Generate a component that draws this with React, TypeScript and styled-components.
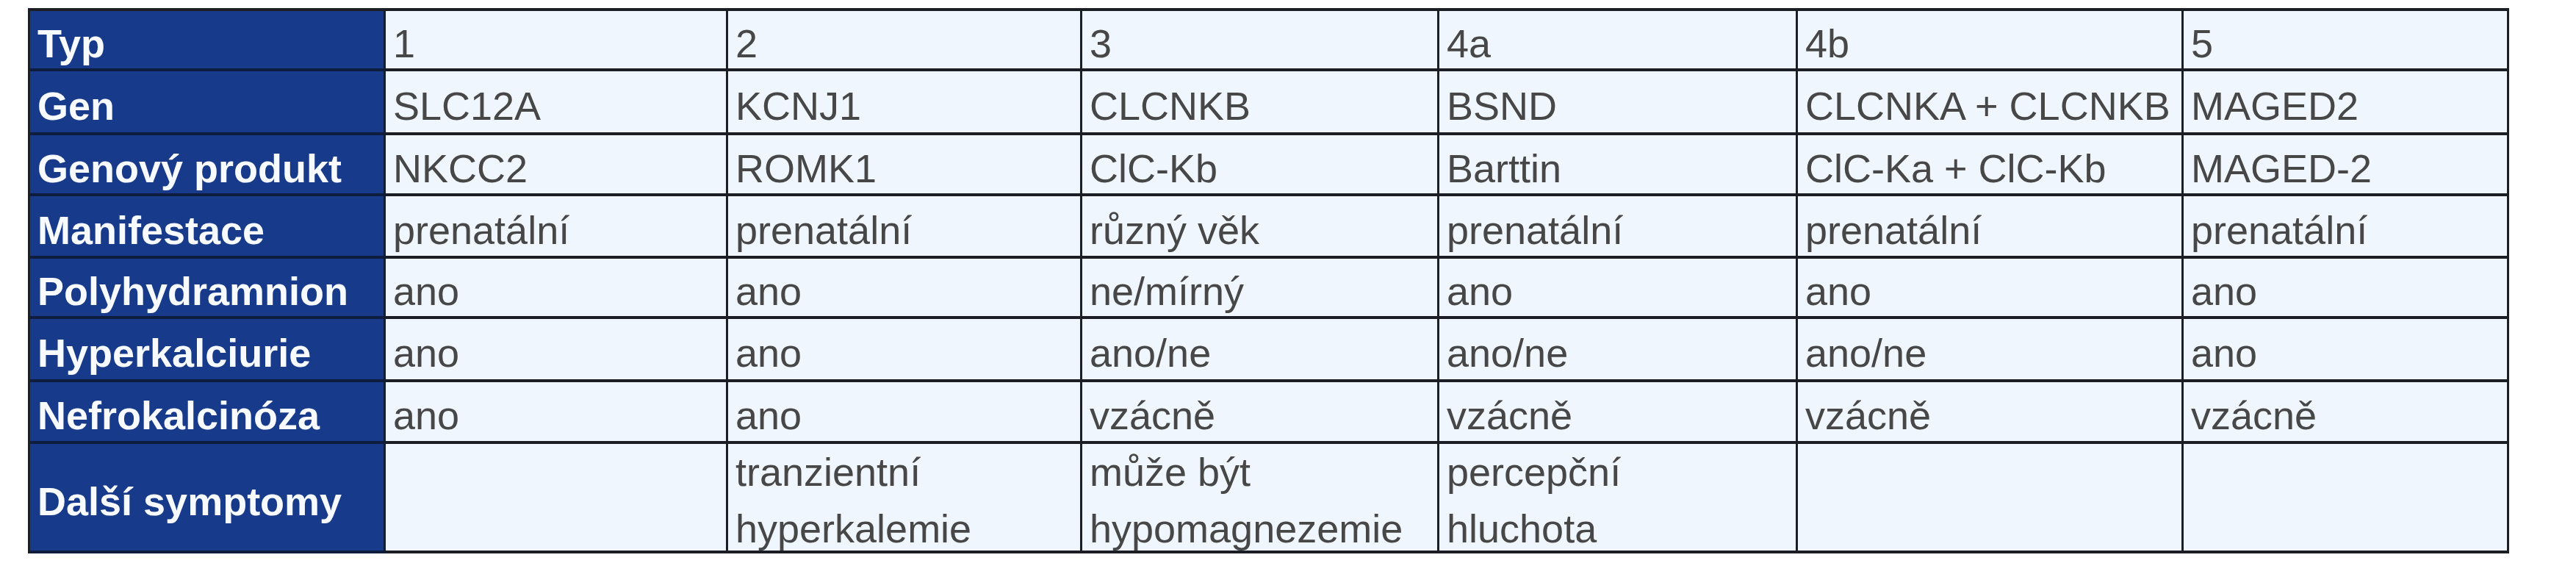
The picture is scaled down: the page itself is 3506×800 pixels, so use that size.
import React from "react";
import styled, { createGlobalStyle } from "styled-components";

const GlobalStyle = createGlobalStyle`
  html, body {
    margin: 0;
    padding: 0;
    background: #ffffff;
  }
  body {
    font-family: "Liberation Sans", Arial, sans-serif;
  }
`;

const LINE = "#1b1e24";

const COLUMNS = [484, 466, 482, 486, 488, 525, 443];

type RowData = { label: string; height: number; cells: string[][] };

const ROWS: RowData[] = [
  { label: "Typ", height: 82, cells: [["1"], ["2"], ["3"], ["4a"], ["4b"], ["5"]] },
  {
    label: "Gen",
    height: 87,
    cells: [["SLC12A"], ["KCNJ1"], ["CLCNKB"], ["BSND"], ["CLCNKA + CLCNKB"], ["MAGED2"]],
  },
  {
    label: "Genový produkt",
    height: 83,
    cells: [["NKCC2"], ["ROMK1"], ["ClC-Kb"], ["Barttin"], ["ClC-Ka + ClC-Kb"], ["MAGED-2"]],
  },
  {
    label: "Manifestace",
    height: 85,
    cells: [["prenatální"], ["prenatální"], ["různý věk"], ["prenatální"], ["prenatální"], ["prenatální"]],
  },
  {
    label: "Polyhydramnion",
    height: 82,
    cells: [["ano"], ["ano"], ["ne/mírný"], ["ano"], ["ano"], ["ano"]],
  },
  {
    label: "Hyperkalciurie",
    height: 86,
    cells: [["ano"], ["ano"], ["ano/ne"], ["ano/ne"], ["ano/ne"], ["ano"]],
  },
  {
    label: "Nefrokalcinóza",
    height: 84,
    cells: [["ano"], ["ano"], ["vzácně"], ["vzácně"], ["vzácně"], ["vzácně"]],
  },
  {
    label: "Další symptomy",
    height: 149,
    cells: [
      [],
      ["tranzientní", "hyperkalemie"],
      ["může být", "hypomagnezemie"],
      ["percepční", "hluchota"],
      [],
      [],
    ],
  },
];

const Page = styled.main`
  padding: 11px 0 0 38px;
`;

const Table = styled.div<{ $columns: number[]; $rows: number[] }>`
  display: grid;
  grid-template-columns: ${(p) => p.$columns.map((c) => `${c}px`).join(" ")};
  grid-template-rows: ${(p) => p.$rows.map((r) => `${r}px`).join(" ")};
  width: max-content;
  border-top: 4px solid ${LINE};
  border-left: 3px solid ${LINE};
  box-sizing: content-box;
`;

const CellBase = styled.div`
  box-sizing: border-box;
  display: flex;
  border-right: 3px solid ${LINE};
  border-bottom: 4px solid ${LINE};
  padding: 10px 6px 0 10px;
  font-size: 54px;
  line-height: 62px;
  white-space: nowrap;
  min-width: 0;
`;

const HeadCell = styled(CellBase)`
  align-items: center;
  background: #183a8b;
  color: #f7faff;
  font-weight: 700;
  border-bottom-color: #0e1c3d;
  border-right-color: #121c33;
`;

const DataCell = styled(CellBase)<{ $multi: boolean }>`
  flex-direction: column;
  justify-content: ${(p) => (p.$multi ? "flex-start" : "center")};
  padding-top: ${(p) => (p.$multi ? "0" : "10px")};
  background: #eff6fd;
  color: #474747;
  font-weight: 400;
  line-height: ${(p) => (p.$multi ? "77px" : "62px")};
  overflow: visible;
`;

const Line = styled.span`
  display: block;
`;

export default function App() {
  return (
    <>
      <GlobalStyle />
      <Page>
        <Table $columns={COLUMNS} $rows={ROWS.map((r) => r.height)}>
          {ROWS.map((row) => (
            <React.Fragment key={row.label}>
              <HeadCell>{row.label}</HeadCell>
              {row.cells.map((lines, i) => (
                <DataCell key={i} $multi={lines.length > 1}>
                  {lines.map((t) => (
                    <Line key={t}>{t}</Line>
                  ))}
                </DataCell>
              ))}
            </React.Fragment>
          ))}
        </Table>
      </Page>
    </>
  );
}
